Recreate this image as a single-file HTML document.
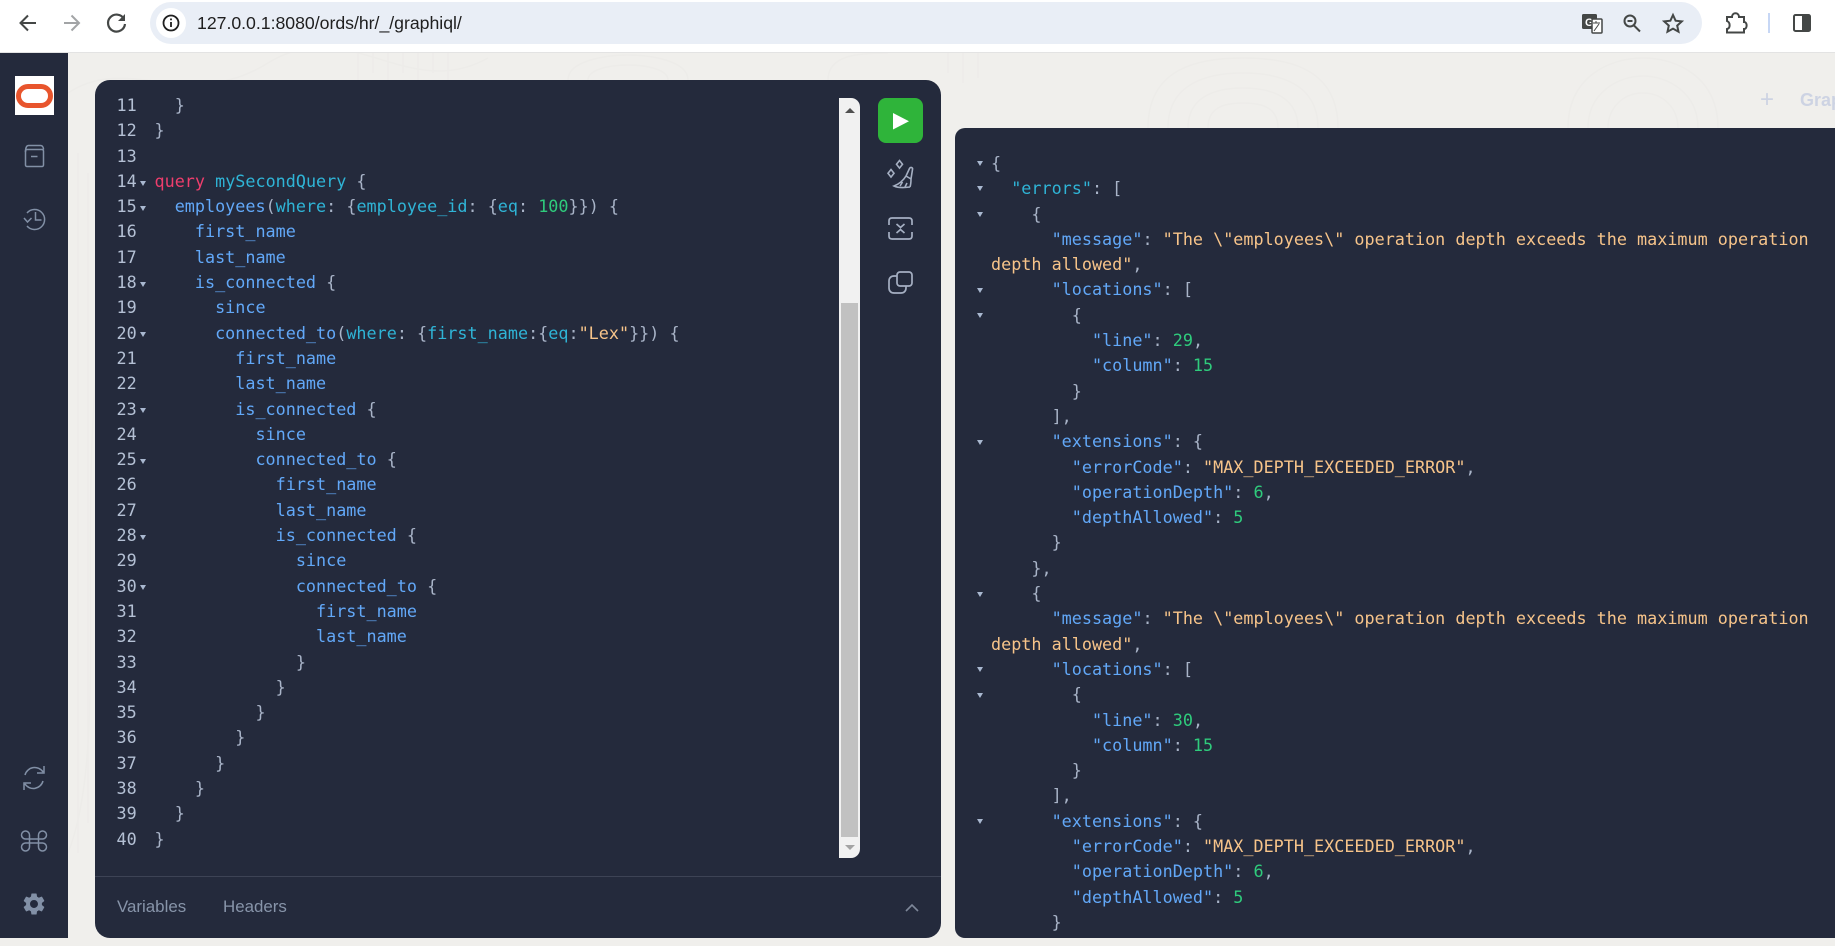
<!DOCTYPE html>
<html><head><meta charset="utf-8"><style>
html,body{margin:0;padding:0;width:1835px;height:946px;overflow:hidden;background:#f0efec}
body{position:relative;font-family:"Liberation Sans",sans-serif}
.abs,svg.i{position:absolute}
.code{position:absolute;font-family:"DejaVu Sans Mono","Liberation Mono",monospace;font-size:16.78px;line-height:25.31px;color:#a9b4c8}
.code div{height:25.31px;white-space:pre}
.f{color:#62a8f8}.a{color:#2fb4d6}.k{color:#ef3e6d}.n{color:#2fcb7c}.s{color:#f7c48a}
.ln{color:#b4c0d4}
.t{position:absolute;width:0;height:0;border-left:3.5px solid transparent;border-right:3.5px solid transparent;border-top:5.5px solid #a9b8d0}
</style></head><body>
<div class="abs" style="left:0;top:0;width:1835px;height:52px;background:#fff"></div>
<div class="abs" style="left:0;top:52px;width:1835px;height:1px;background:#e3e3e3"></div>
<div class="abs" style="left:150px;top:2px;width:1552px;height:42px;border-radius:21px;background:#e9eef6"></div>
<div class="abs" style="left:156px;top:8px;width:30px;height:30px;border-radius:15px;background:#fff"></div>
<svg class="i" style="left:0;top:0" width="1835" height="52" fill="none" stroke="#444746" stroke-width="2">
<path d="M36 23H21M28 15.500 20.500 23l7.500 7.500"/>
<path d="M64 23h15M71.500 15.500 79 23l-7.500 7.500" stroke="#a2a4a6"/>
<path d="M124 19a8.500 8.500 0 1 0 1 5" stroke-width="2.200"/><path d="M125 14v7h-7" fill="#444746" stroke="none"/>
<circle cx="171" cy="23" r="7.500" stroke="#1f1f1f" stroke-width="1.800"/><path d="M171 22v5M171 18.500v1.800" stroke="#1f1f1f" stroke-width="1.800"/>
<rect x="1582" y="14" width="15" height="15" rx="1.500" fill="#444746" stroke="none"/><text x="1585" y="26" font-family="Liberation Sans" font-size="11" font-weight="bold" fill="#fff" stroke="none">G</text><rect x="1592" y="19" width="10" height="14" rx="1" fill="#fff" stroke="#444746" stroke-width="1.500"/>
<path d="M1593 23h7M1596 21v2M1594 31l5-7" stroke-width="1"/>
<circle cx="1630" cy="21" r="5.500" stroke-width="2"/><path d="M1634 25.500 1640 31.500M1627.500 21h5" stroke-width="2"/>
<path d="M1673 15l2.600 5.700 6.200.7-4.600 4.200 1.300 6.100-5.500-3.100-5.500 3.100 1.300-6.100-4.600-4.200 6.200-.7z" stroke-width="2"/>
<path d="M1727 17h5c0-5 7-5 7 0h5v5c3.500 0 3.500 7 0 7v3.500h-17v-3.500c3.500-1 3.500-6.500 0-8z" stroke-width="2"/>
<path d="M1769 13v20" stroke="#c7d7f5" stroke-width="2"/>
<rect x="1794" y="15" width="16" height="16" rx="1.500" stroke-width="2"/><rect x="1802" y="15" width="8" height="16" fill="#444746" stroke="none"/>
</svg>
<div class="abs" style="left:197px;top:12px;font-size:17.700px;line-height:22px;color:#1f1f1f;letter-spacing:-.02px;white-space:pre">127.0.0.1:8080/ords/hr/_/graphiql/</div>

<svg class="i" style="left:68px;top:53px" width="1767" height="893" fill="none" stroke="#edecE9" stroke-width="1.500">
<path d="M0 40C60 0 120 60 200 10S340 50 420 5M0 800c40-100 10-300 30-500M500 27c0-20 40-25 60-25s60 5 60 25M520 27c0-10 20-15 40-15s40 5 40 15"/>
<path d="M760 27c0-25 30-27 60-27M1080 75c0-60 50-70 95-70s95 10 95 70M1100 75c0-45 40-55 75-55s75 10 75 55M1120 75c0-30 25-40 55-40s55 10 55 40M1140 75c0-20 15-25 35-25s35 5 35 25"/>
<path d="M1500 75c0-50 40-70 75-70s75 20 75 70M1520 75c0-35 30-52 55-52s55 17 55 52M1540 75c0-20 15-35 35-35s35 15 35 35"/>
<path d="M880 0v20M895 0v30M910 0v25M290 0v27M305 0v20M320 0v27M335 0v20M350 0v27M365 0v20M380 0v27M10 100v700M20 120v650"/>
</svg>

<div class="abs" style="left:0;top:53px;width:68px;height:885px;background:#242a3c"></div>
<div class="abs" style="left:95px;top:80px;width:846px;height:858px;background:#242a3c;border-radius:15px"></div>
<div class="abs" style="left:955px;top:128px;width:880px;height:810px;background:#242a3c;border-radius:10px 0 0 10px"></div>

<div class="abs" style="left:15px;top:76px;width:39px;height:39px;background:#fff"></div>
<div class="abs" style="left:16px;top:84px;width:37px;height:24px;box-sizing:border-box;border:5px solid #e8552d;border-radius:12px"></div>
<svg class="i" style="left:0;top:0" width="68" height="946" fill="none" stroke="#8290a6" stroke-width="1.500">
<rect x="25.500" y="149.500" width="18" height="17" rx="1.500"/><path d="M25.500 152c0-4 1-6.500 3-6.500h12c2 0 3 2 3 4M31 156.500h6.500"/>
<path d="M27 213a10 10 0 1 1 0 13M24 218l3.500 4 4-4"/><path d="M35.500 212v8h6"/>
<path d="M25 775a10 10 0 0 1 18-3M43 781a10 10 0 0 1-18 3M44 766v7h-7M24 790v-7h7"/>
<path d="M29.500 835v12a4 4 0 1 1-4-4h17a4 4 0 1 1-4 4v-12a4 4 0 1 1 4 4h-17a4 4 0 1 1 4-4z"/>
<path transform="translate(20.800 890.800) scale(1.100)" fill="#8290a6" stroke="none" fill-rule="evenodd" d="M19.140 12.940c.04-.3.06-.61.06-.94 0-.32-.02-.64-.07-.94l2.030-1.580c.18-.14.23-.41.12-.61l-1.920-3.320c-.12-.22-.37-.29-.59-.22l-2.390.96c-.5-.38-1.030-.7-1.620-.94l-.36-2.540c-.04-.24-.24-.41-.48-.41h-3.840c-.24 0-.43.17-.47.41l-.36 2.540c-.59.24-1.130.57-1.620.94l-2.390-.96c-.22-.08-.47 0-.59.22L2.740 8.870c-.12.21-.08.47.12.61l2.030 1.580c-.05.3-.09.63-.09.94s.02.64.07.94l-2.030 1.580c-.18.14-.23.41-.12.61l1.920 3.320c.12.22.37.29.59.22l2.390-.96c.5.38 1.030.7 1.620.94l.36 2.540c.05.24.24.41.48.41h3.840c.24 0 .44-.17.47-.41l.36-2.540c.59-.24 1.130-.56 1.620-.94l2.390.96c.22.08.47 0 .59-.22l1.920-3.320c.12-.22.07-.47-.12-.61l-2.010-1.580zM12 15.600c-1.980 0-3.600-1.620-3.600-3.600s1.620-3.600 3.600-3.600 3.600 1.620 3.600 3.600-1.620 3.600-3.600 3.600z"/>
</svg>

<div class="code ln" style="left:116.500px;top:93px"><div>11</div><div>12</div><div>13</div><div>14</div><div>15</div><div>16</div><div>17</div><div>18</div><div>19</div><div>20</div><div>21</div><div>22</div><div>23</div><div>24</div><div>25</div><div>26</div><div>27</div><div>28</div><div>29</div><div>30</div><div>31</div><div>32</div><div>33</div><div>34</div><div>35</div><div>36</div><div>37</div><div>38</div><div>39</div><div>40</div></div>
<div class="t" style="left:139.500px;top:180.500px"></div>
<div class="t" style="left:139.500px;top:205.500px"></div>
<div class="t" style="left:139.500px;top:281.500px"></div>
<div class="t" style="left:139.500px;top:331.500px"></div>
<div class="t" style="left:139.500px;top:407.500px"></div>
<div class="t" style="left:139.500px;top:458.500px"></div>
<div class="t" style="left:139.500px;top:534.500px"></div>
<div class="t" style="left:139.500px;top:584.500px"></div>

<div class="code" style="left:154.500px;top:93px">
<div>  }</div>
<div>}</div>
<div> </div>
<div><span class="k">query</span> <span class="a">mySecondQuery</span> {</div>
<div>  <span class="f">employees</span>(<span class="a">where</span>: {<span class="a">employee_id</span>: {<span class="a">eq</span>: <span class="n">100</span>}}) {</div>
<div>    <span class="f">first_name</span></div>
<div>    <span class="f">last_name</span></div>
<div>    <span class="f">is_connected</span> {</div>
<div>      <span class="f">since</span></div>
<div>      <span class="f">connected_to</span>(<span class="a">where</span>: {<span class="a">first_name</span>:{<span class="a">eq</span>:<span class="s">"Lex"</span>}}) {</div>
<div>        <span class="f">first_name</span></div>
<div>        <span class="f">last_name</span></div>
<div>        <span class="f">is_connected</span> {</div>
<div>          <span class="f">since</span></div>
<div>          <span class="f">connected_to</span> {</div>
<div>            <span class="f">first_name</span></div>
<div>            <span class="f">last_name</span></div>
<div>            <span class="f">is_connected</span> {</div>
<div>              <span class="f">since</span></div>
<div>              <span class="f">connected_to</span> {</div>
<div>                <span class="f">first_name</span></div>
<div>                <span class="f">last_name</span></div>
<div>              }</div>
<div>            }</div>
<div>          }</div>
<div>        }</div>
<div>      }</div>
<div>    }</div>
<div>  }</div>
<div>}</div>
</div>

<div class="abs" style="left:839px;top:98px;width:21px;height:760px;background:#f1f1f1;border-radius:0 9px 9px 0"></div>
<div class="abs" style="left:841px;top:303px;width:17px;height:534px;background:#c1c1c1"></div>
<div class="abs" style="left:845px;top:108px;width:0;height:0;border-left:5px solid transparent;border-right:5px solid transparent;border-bottom:5px solid #505050"></div>
<div class="abs" style="left:845px;top:845px;width:0;height:0;border-left:5px solid transparent;border-right:5px solid transparent;border-top:5px solid #a3a3a3"></div>

<div class="abs" style="left:878px;top:98px;width:45px;height:45px;background:#2fb43a;border-radius:8px"></div>
<svg class="i" style="left:870px;top:90px" width="60" height="210" fill="none" stroke="#a5afc2" stroke-width="1.600">
<path d="M23 23v16.500l16-8.250z" fill="#fff" stroke="none"/>
<path d="M29.500 70.500l3 3.800-3 3.800-3-3.800zM21 79.500l3 3.800-3 3.800-3-3.800z"/>
<path d="M36 86l3.500-7.500c1-2 3.500-1 3 1L41 89c0 3 0 5-1 8M36 86c-3 5-7 8-12 10 4 2 12 1.500 16 1M36 86l5 3M30 96l2.500-4M35 97l2-4"/>
<path d="M19 135v-4c0-2 1-3 3-3h17c2 0 3 1 3 3v4M19 142v4c0 2 1 3 3 3h17c2 0 3-1 3-3v-4M26.500 134l4 3.500 4-3.500M26.500 143l4-3.500 4 3.500" stroke-width="1.700"/>
<rect x="27" y="182" width="15" height="14" rx="3" stroke-width="1.700"/><path d="M27 186h-3c-3 0-5 2-5 5v7c0 3 2 5 5 5h7c3 0 5-2 5-5v-2" stroke-width="1.700"/>
</svg>

<div class="abs" style="left:95px;top:876px;width:846px;height:1px;background:#3d4355"></div>
<div class="abs" style="left:117px;top:897px;font-size:16.900px;line-height:20px;color:#8794a9">Variables</div>
<div class="abs" style="left:223px;top:897px;font-size:16.900px;line-height:20px;color:#8794a9">Headers</div>
<svg class="i" style="left:900px;top:898px" width="24" height="18" fill="none" stroke="#7e8799" stroke-width="1.600"><path d="M6 13l6-6 6 6"/></svg>

<div class="code" style="left:991px;top:151px">
<div>{</div>
<div>  <span class="a">"errors"</span>: [</div>
<div>    {</div>
<div>      <span class="f">"message"</span>: <span class="s">"The \"employees\" operation depth exceeds the maximum operation</span></div>
<div><span class="s">depth allowed"</span>,</div>
<div>      <span class="f">"locations"</span>: [</div>
<div>        {</div>
<div>          <span class="f">"line"</span>: <span class="n">29</span>,</div>
<div>          <span class="f">"column"</span>: <span class="n">15</span></div>
<div>        }</div>
<div>      ],</div>
<div>      <span class="f">"extensions"</span>: {</div>
<div>        <span class="f">"errorCode"</span>: <span class="s">"MAX_DEPTH_EXCEEDED_ERROR"</span>,</div>
<div>        <span class="f">"operationDepth"</span>: <span class="n">6</span>,</div>
<div>        <span class="f">"depthAllowed"</span>: <span class="n">5</span></div>
<div>      }</div>
<div>    },</div>
<div>    {</div>
<div>      <span class="f">"message"</span>: <span class="s">"The \"employees\" operation depth exceeds the maximum operation</span></div>
<div><span class="s">depth allowed"</span>,</div>
<div>      <span class="f">"locations"</span>: [</div>
<div>        {</div>
<div>          <span class="f">"line"</span>: <span class="n">30</span>,</div>
<div>          <span class="f">"column"</span>: <span class="n">15</span></div>
<div>        }</div>
<div>      ],</div>
<div>      <span class="f">"extensions"</span>: {</div>
<div>        <span class="f">"errorCode"</span>: <span class="s">"MAX_DEPTH_EXCEEDED_ERROR"</span>,</div>
<div>        <span class="f">"operationDepth"</span>: <span class="n">6</span>,</div>
<div>        <span class="f">"depthAllowed"</span>: <span class="n">5</span></div>
<div>      }</div>
</div>
<div class="t" style="left:976.500px;top:161px"></div>
<div class="t" style="left:976.500px;top:186px"></div>
<div class="t" style="left:976.500px;top:212px"></div>
<div class="t" style="left:976.500px;top:288px"></div>
<div class="t" style="left:976.500px;top:313px"></div>
<div class="t" style="left:976.500px;top:440px"></div>
<div class="t" style="left:976.500px;top:592px"></div>
<div class="t" style="left:976.500px;top:667px"></div>
<div class="t" style="left:976.500px;top:693px"></div>
<div class="t" style="left:976.500px;top:819px"></div>

<div class="abs" style="left:1760px;top:87px;font-size:24px;line-height:26px;color:#cdd3e3;font-weight:300">+</div>
<div class="abs" style="left:1800px;top:89px;font-size:18px;line-height:22px;color:#cdd3e3;font-weight:bold;white-space:pre">Graphi</div>
</body></html>
